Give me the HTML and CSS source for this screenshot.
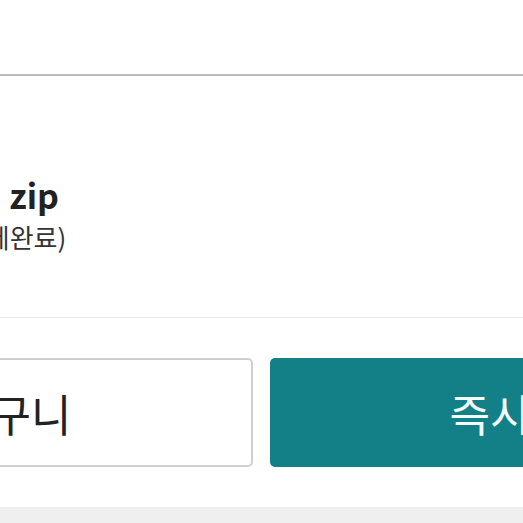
FILE: index.html
```html
<!DOCTYPE html>
<html>
	<head>
		<meta charset="utf-8">
		<title>주문 상세</title>
		<link rel="stylesheet" href="styles.css">
	</head>
	<body>

	<div class="page">
		<div class="top-bar"></div>

		<div class="order-item">
			<div class="item-info">
				<p class="item-title">앨범 zip</p>
				<p class="item-status">(결제완료)</p>
			</div>
		</div>

		<div class="actions">
			<a href="#" class="btn btn-cart">장바구니</a>
			<a href="#" class="btn btn-buy">즉시구매</a>
		</div>

		<div class="bottom-area"></div>
	</div>

	</body>
</html>
```

FILE: styles.css
```css
* {
	margin: 0;
	padding: 0;
	box-sizing: border-box;
}
body {
	background: #fff;
	font-family: "Noto Sans CJK KR", "Noto Sans", sans-serif;
	color: #222;
	overflow: hidden;
}
.page {
	width: 1097px;
	margin-left: -289px;
}
.top-bar {
	height: 76px;
	border-bottom: 2px solid #bdbdbd;
}
.order-item {
	padding: 98px 0 63px 228px;
	border-bottom: 1px solid #ebebeb;
}
.item-title {
	font-size: 34px;
	line-height: 42px;
	font-weight: bold;
	color: #222;
}
.item-status {
	margin: 4px 0 0 14px;
	font-size: 26px;
	line-height: 34px;
	color: #333;
}
.actions {
	display: flex;
	gap: 17px;
	padding: 40px 17px;
}
.btn {
	flex: 1;
	height: 109px;
	display: flex;
	align-items: center;
	justify-content: center;
	border-radius: 5px;
	font-size: 44px;
	text-decoration: none;
}
.btn-cart {
	border: 2px solid #cfcfcf;
	color: #222;
	background: #fff;
}
.btn-buy {
	background: #137f87;
	color: #f4fbfb;
}
.bottom-area {
	height: 40px;
	background: #efefef;
}
```
